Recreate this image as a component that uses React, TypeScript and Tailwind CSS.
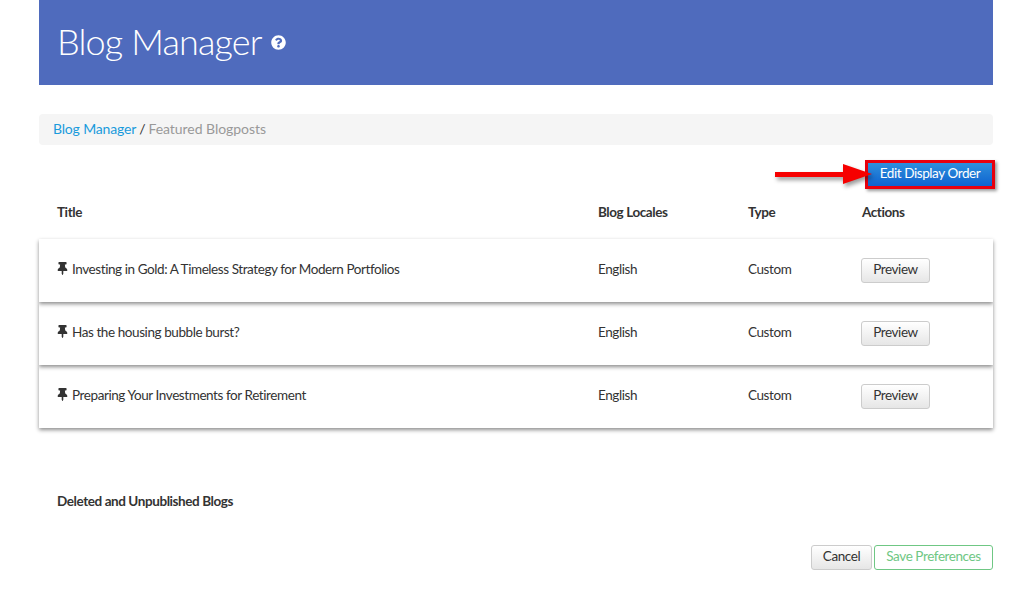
import React from 'react';
import { FaQuestionCircle, FaThumbtack } from 'react-icons/fa';

const POSTS = [
  { title: 'Investing in Gold: A Timeless Strategy for Modern Portfolios', z: 'z-[3]' },
  { title: 'Has the housing bubble burst?', z: 'z-[2]' },
  { title: 'Preparing Your Investments for Retirement', z: 'z-[1]' },
];

const COLS = 'grid grid-cols-[541px_150px_113px_1fr] pl-[18px]';
const TIGHT = 'text-[13.5px] tracking-[-0.42px]';

const App: React.FC = () => {
  return (
    <div className="min-h-[595px] bg-white font-['Lato',sans-serif] text-[14px] text-[#333]">
      <div className="ml-[39px] w-[954px]">
        <header className="flex h-[85px] items-center bg-[#4f6bbd] pl-[18px] text-white">
          <h1 className="mb-[4px] text-[36px] leading-none font-light tracking-[-0.85px]">Blog Manager</h1>
          <FaQuestionCircle className="ml-[9px] mb-[1px] size-[15px]" />
        </header>

        <nav className="mt-[29px] flex h-[31px] items-center rounded-[4px] bg-[#f5f5f5] pb-[3px] pl-[14px]">
          <a className="tracking-[-0.17px] text-[#1a9bdc]">Blog Manager</a>
          <span className="mx-[3px]">/</span>
          <span className="tracking-[-0.05px] text-[#999]">Featured Blogposts</span>
        </nav>

        <div className="mt-[15px] flex h-[29px] items-center justify-end">
          <svg
            width="97"
            height="29"
            viewBox="0 0 97 29"
            className="relative z-10 mr-[-7px] shrink-0 drop-shadow-[2px_3px_2px_rgba(0,0,0,0.4)]"
          >
            <path d="M0 12H68V4L97 14L68 24V17H0Z" fill="#f60000" />
          </svg>
          <button className={`${TIGHT} mr-[-2px] flex h-[29px] w-[130px] items-center justify-center border-[3px] border-[#e8000d] bg-gradient-to-b from-[#2f8fdc] to-[#0f62cf] pb-[2px] text-white shadow-[2px_2px_3px_rgba(0,0,0,0.4)]`}>
            Edit Display Order
          </button>
        </div>

        <div className={`${COLS} ${TIGHT} mt-[13px] h-[19px] items-center font-bold`}>
          <span>Title</span>
          <span>Blog Locales</span>
          <span>Type</span>
          <span className="pl-[1px]">Actions</span>
        </div>

        <div className="mt-[18px] flex flex-col">
          {POSTS.map(({ title, z }) => (
            <div
              key={title}
              className={`${COLS} ${TIGHT} ${z} relative h-[63px] items-center bg-white shadow-[0_2px_4px_rgba(0,0,0,0.45)]`}
            >
              <div className="flex items-center pb-[2px]">
                <FaThumbtack className="ml-[-1px] mr-[3px] mb-[3px] size-[13px] text-[#333]" />
                <span>{title}</span>
              </div>
              <span className="pb-[2px]">English</span>
              <span className="pb-[2px]">Custom</span>
              <div>
                <button className="h-[25px] w-[69px] rounded-[3px] border border-[#ccc] bg-gradient-to-b from-white to-[#e6e6e6] pb-[2px] leading-none">
                  Preview
                </button>
              </div>
            </div>
          ))}
        </div>

        <div className={`${TIGHT} mt-[63px] pl-[18px] font-bold`}>Deleted and Unpublished Blogs</div>

        <div className={`${TIGHT} mt-[34px] flex justify-end gap-[2px]`}>
          <button className="h-[25px] w-[61px] rounded-[3px] border border-[#ccc] bg-gradient-to-b from-white to-[#e6e6e6] pb-[2px] leading-none">
            Cancel
          </button>
          <button className="h-[25px] w-[119px] rounded-[3px] border border-[#6fc784] bg-white pb-[2px] leading-none text-[#6fc784]">
            Save Preferences
          </button>
        </div>
      </div>
    </div>
  );
};

export default App;
